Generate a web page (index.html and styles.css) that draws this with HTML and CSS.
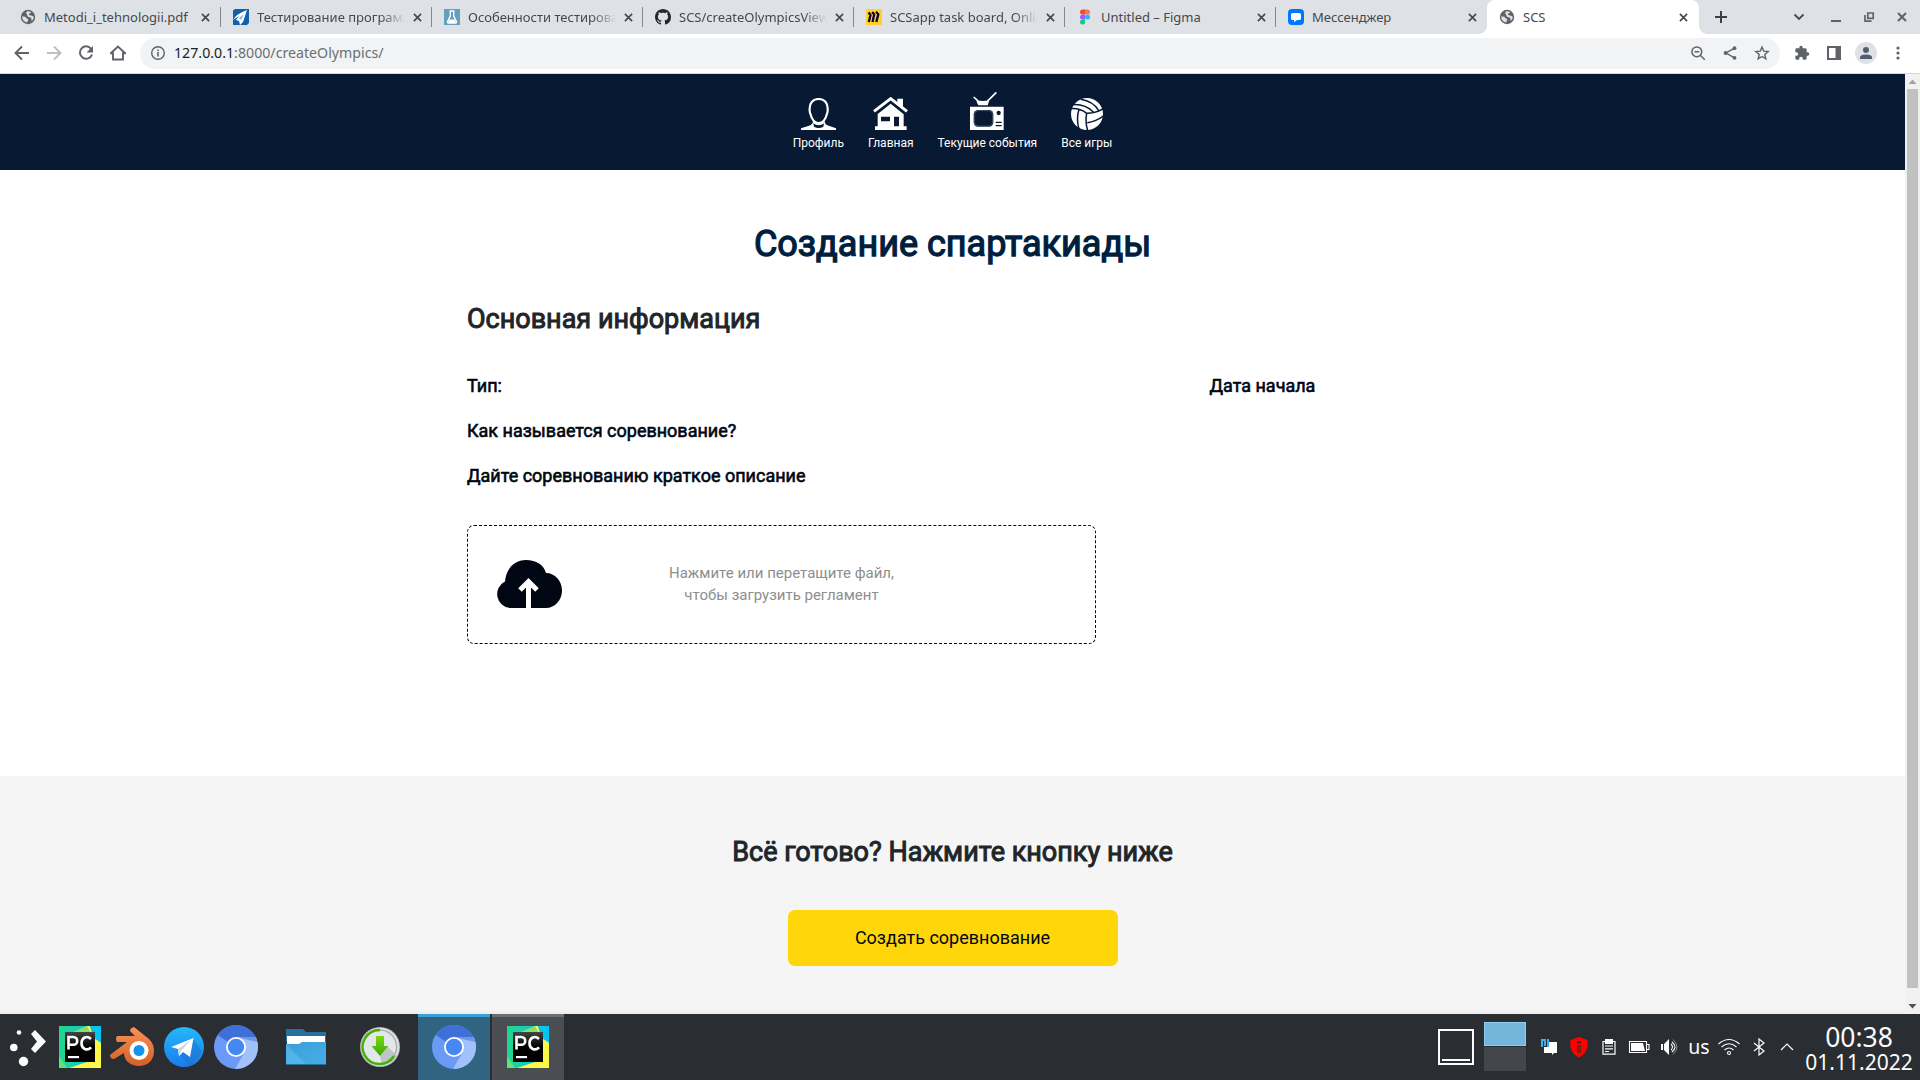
FILE: index.html
```html
<!DOCTYPE html>
<html lang="ru">
<head>
<meta charset="utf-8">
<title>SCS</title>
<link rel="stylesheet" href="styles.css">
</head>
<body>
<svg class="defs" width="0" height="0">
  <defs>
    <linearGradient id="pcg" x1="0" y1="0" x2="1" y2="0"><stop offset="0" stop-color="#21d789"/><stop offset="1" stop-color="#07c3f2"/></linearGradient>
    <linearGradient id="blk" x1="0" y1="0" x2="0" y2="1"><stop offset="0" stop-color="#444"/><stop offset=".5" stop-color="#000"/></linearGradient>
    <linearGradient id="tg" x1="0" y1="0" x2="0" y2="1"><stop offset="0" stop-color="#26b8fb"/><stop offset="1" stop-color="#1a7bee"/></linearGradient>
    <linearGradient id="fold" x1="0" y1="0" x2="1" y2="1"><stop offset="0" stop-color="#3b9fd9"/><stop offset="1" stop-color="#45aee6"/></linearGradient>
    <linearGradient id="orb" x1="0" y1="0" x2="0" y2="1"><stop offset="0" stop-color="#fb9150"/><stop offset="1" stop-color="#d4602c"/></linearGradient>
    <linearGradient id="arr" x1="0" y1="0" x2="0" y2="1"><stop offset="0" stop-color="#7adb0c"/><stop offset="1" stop-color="#3aa50a"/></linearGradient>
    <clipPath id="disc"><circle cx="22" cy="22" r="22"/></clipPath>
  </defs>
  <symbol id="globe" viewBox="0 0 16 16"><circle cx="8" cy="8" r="7.2" fill="#5f6368"/><path d="M2.3 7.3c2 .2 3.5.4 4 1.6.4 1 1.9.6 2 1.7.1 1-1 1.2-.9 2.8C4 13.300 2 10.500 2.300 7.300zM7 2.400c1.500-.3 3 .1 4 .8-.3 1.200-1.700.9-2.100 1.800-.3.800 1 1.200 2 1.400 1.300.2 2.200.600 2.900 1.300-.1 1.800-1 3.400-2.200 4.400-.3-1.300.2-2.300-.5-3.100-.8-.8-2.300-.5-3.300-1.400C6.700 6.500 7.800 5.900 6.700 5.100 6 4.600 6 3.100 7 2.400z" fill="#dee1e6"/></symbol>
  <symbol id="x" viewBox="0 0 10 10"><path d="M1 1l8 8M9 1L1 9" stroke="#45494d" stroke-width="1.8" fill="none"/></symbol>
  <symbol id="pycharm" viewBox="0 0 42 42"><rect width="42" height="42" fill="url(#pcg)"/><path d="M22 7L28 0h3l3 11 8 4v27H10L34 34z" fill="#fcf84a"/><path d="M0 30l8 12H0z" fill="#5fe37a"/><path d="M31 0h11v17l-7-5z" fill="#07c3f2"/><path d="M14 6l14-6 4 7z" fill="#8be064"/><rect x="6" y="6" width="30" height="30" fill="url(#blk)"/><rect x="9" y="30" width="11" height="2.200" fill="#fff"/><path d="M9.500 23.500V11h4.700c5.300 0 5.300 7.800 0 7.800H9.500M32 13c-4-4-9.500-1.500-9.500 4.200s5.500 8.300 9.600 4.100" fill="none" stroke="#fff" stroke-width="2.600"/></symbol>
  <symbol id="chromium" viewBox="0 0 44 44"><g clip-path="url(#disc)"><rect width="44" height="44" fill="#6b9af6"/><path d="M22 22L2 9V0h42v13H22z" fill="#3f6fd8"/><path d="M22 12h24v34H20l10-18z" fill="#a1c1fb"/><path d="M22 12h21v5L26 13z" fill="#6f96e6"/></g><circle cx="22" cy="22" r="10" fill="#fff"/><circle cx="22" cy="22" r="8.200" fill="#4587f3"/></symbol>
</svg>

<header class="tabs">
  <div class="tab first"><svg class="fav"><use href="#globe"/></svg><span class="title">Metodi_i_tehnologii.pdf</span><svg class="x"><use href="#x"/></svg></div>
  <div class="tab"><svg class="fav" viewBox="0 0 16 16"><path d="M0 1.500L2 0h14v14l-2 2H0z" fill="#1161b0"/><path d="M0 11Q3 5 14 1l-1 3-3 9-3 3-1-4-3-1 3-4z" fill="#fff"/><path d="M6 9l5-4-3 6z" fill="#87b4dc"/></svg><span class="title fade">Тестирование программ</span><svg class="x"><use href="#x"/></svg></div>
  <div class="tab"><svg class="fav" viewBox="0 0 16 16"><rect width="16" height="16" fill="#61a1bd"/><path d="M5.500 2h5M6.300 2v5L3.500 12.700q-.3 1.300 1 1.300h7q1.300 0 1-1.300L9.700 7V2" fill="none" stroke="#fff" stroke-width="1.400"/><path d="M5.500 10.500h5l1.500 3.500H4z" fill="#fff"/></svg><span class="title fade">Особенности тестирова</span><svg class="x"><use href="#x"/></svg></div>
  <div class="tab"><svg class="fav" viewBox="0 0 16 16"><path fill="#24292f" d="M8 0C3.580 0 0 3.580 0 8c0 3.540 2.290 6.530 5.470 7.590.4.070.55-.17.55-.38 0-.19-.01-.82-.01-1.490-2.010.37-2.530-.49-2.690-.94-.09-.23-.48-.94-.82-1.130-.28-.15-.68-.52-.01-.53.63-.01 1.080.58 1.230.82.72 1.210 1.870.87 2.330.66.070-.52.28-.87.51-1.070-1.780-.2-3.640-.89-3.640-3.950 0-.87.31-1.590.82-2.150-.08-.2-.36-1.020.08-2.120 0 0 .67-.21 2.200.82.640-.18 1.320-.27 2-.27s1.360.09 2 .27c1.530-1.040 2.200-.82 2.200-.82.440 1.100.160 1.920.080 2.120.51.560.82 1.270.82 2.150 0 3.070-1.870 3.750-3.650 3.950.29.250.54.730.54 1.480 0 1.070-.01 1.930-.01 2.200 0 .21.15.46.55.38A8.010 8.010 0 0 0 16 8c0-4.420-3.580-8-8-8z"/></svg><span class="title fade">SCS/createOlympicsView</span><svg class="x"><use href="#x"/></svg></div>
  <div class="tab"><svg class="fav" viewBox="0 0 16 16"><rect width="16" height="16" rx="1" fill="#ffd02f"/><path d="M2.500 3.500l2 2.500L2.800 13M6.200 3l2 2.500L6.500 13M10 2.700l2.300 2.500L10.300 13" fill="none" stroke="#0a0630" stroke-width="2.300"/></svg><span class="title fade">SCSapp task board, Onlin</span><svg class="x"><use href="#x"/></svg></div>
  <div class="tab"><svg class="fav" viewBox="0 0 16 16"><path d="M8 .5H5.500a2.500 2.500 0 0 0 0 5H8z" fill="#f24e1e"/><path d="M8 .5h2.500a2.500 2.500 0 0 1 0 5H8z" fill="#ff7262"/><path d="M8 5.500H5.500a2.500 2.500 0 0 0 0 5H8z" fill="#a259ff"/><circle cx="10.500" cy="8" r="2.500" fill="#1abcfe"/><path d="M8 10.500H5.500A2.500 2.500 0 1 0 8 13z" fill="#0acf83"/></svg><span class="title">Untitled – Figma</span><svg class="x"><use href="#x"/></svg></div>
  <div class="tab last"><svg class="fav" viewBox="0 0 16 16"><rect width="16" height="16" rx="4" fill="#07f"/><path d="M4.500 4h7q1.500 0 1.500 1.500v4q0 1.500-1.500 1.500H9l-3 2.200V11H4.500Q3 11 3 9.500v-4Q3 4 4.500 4z" fill="#fff"/></svg><span class="title">Мессенджер</span><svg class="x"><use href="#x"/></svg></div>
  <div class="tab active"><svg class="fav"><use href="#globe"/></svg><span class="title">SCS</span><svg class="x"><use href="#x"/></svg></div>
  <svg class="plus" viewBox="0 0 12 12"><path d="M6 0v12M0 6h12" stroke="#3c4043" stroke-width="2"/></svg>
  <div class="wm">
    <svg viewBox="0 0 16 16"><path d="M3.500 5.500L8 10l4.500-4.500" fill="none" stroke="#45494d" stroke-width="1.800"/></svg>
    <svg viewBox="0 0 16 16"><path d="M3 12h10" stroke="#5f6368" stroke-width="2"/></svg>
    <svg viewBox="0 0 16 16"><path d="M6.800 4h5.400v5.400H6.800zM4 6v6.200h6.500" fill="none" stroke="#5f6368" stroke-width="1.700"/></svg>
    <svg viewBox="0 0 16 16"><path d="M4 4l8 8M12 4l-8 8" stroke="#5f6368" stroke-width="2"/></svg>
  </div>
</header>

<div class="toolbar">
  <div class="nav-buttons">
    <svg viewBox="0 0 16 16"><path d="M15 8H2M8 1.500L1.500 8 8 14.500" fill="none" stroke="#5f6368" stroke-width="1.900"/></svg>
    <svg viewBox="0 0 16 16"><path d="M1 8h13M8 1.500L14.500 8 8 14.500" fill="none" stroke="#bcbec1" stroke-width="1.900"/></svg>
    <svg viewBox="0 0 16 16"><path d="M13.200 4A6.200 6.200 0 1 0 14 9.500" fill="none" stroke="#5f6368" stroke-width="2"/><path d="M15 1v6.500H8.500z" fill="#5f6368"/></svg>
    <svg viewBox="0 0 16 16"><path d="M.8 8.200L8 1.500l7.200 6.700H13V14.500H3V8.200z" fill="none" stroke="#5f6368" stroke-width="1.900"/></svg>
  </div>
  <div class="omnibox">
    <svg viewBox="0 0 16 16"><circle cx="8" cy="8" r="6.300" fill="none" stroke="#5f6368" stroke-width="1.400"/><path d="M8 7v4.500M8 4.400v1.500" stroke="#5f6368" stroke-width="1.600"/></svg>
    <span class="url"><b>127.0.0.1</b>:8000/createOlympics/</span>
    <div class="actions">
      <svg viewBox="0 0 16 16"><circle cx="6.800" cy="6.800" r="4.900" fill="none" stroke="#5f6368" stroke-width="1.500"/><path d="M4.500 6.800h4.600M10.300 10.300l4.500 4.500" stroke="#5f6368" stroke-width="1.500"/></svg>
      <svg viewBox="0 0 16 16"><path d="M12.500 3.200L4 8l8.500 4.800" fill="none" stroke="#5f6368" stroke-width="1.400"/><circle cx="12.500" cy="3.200" r="1.900" fill="#5f6368"/><circle cx="3.600" cy="8" r="2" fill="#5f6368"/><circle cx="12.500" cy="12.800" r="1.900" fill="#5f6368"/></svg>
      <svg viewBox="0 0 16 16"><path d="M8 2l1.700 4.100 4.500.4-3.400 2.900 1 4.400L8 11.500l-3.800 2.300 1-4.400-3.400-2.900 4.500-.4z" fill="none" stroke="#5f6368" stroke-width="1.400"/></svg>
    </div>
  </div>
  <div class="extras">
    <svg viewBox="0 0 24 24"><path fill="#5f6368" d="M20.500 11H19V7c0-1.100-.9-2-2-2h-4V3.500a2.500 2.500 0 0 0-5 0V5H4c-1.100 0-1.990.9-1.990 2v3.800H3.500c1.490 0 2.700 1.210 2.700 2.700s-1.210 2.700-2.700 2.700H2V20c0 1.100.9 2 2 2h3.800v-1.500c0-1.490 1.210-2.700 2.700-2.700s2.700 1.210 2.700 2.700V22H17c1.100 0 2-.9 2-2v-4h1.500a2.500 2.500 0 0 0 0-5z"/></svg>
    <svg viewBox="0 0 16 16"><path d="M2 2h12v12H2z" fill="none" stroke="#5f6368" stroke-width="2"/><path d="M9.500 2H14v12H9.500z" fill="#5f6368"/></svg>
    <svg class="avatar" viewBox="0 0 22 22"><circle cx="11" cy="11" r="11" fill="#dee1e6"/><circle cx="11" cy="8" r="3" fill="#525d72"/><path d="M5 17v-1.500q0-3 6-3t6 3V17z" fill="#525d72"/></svg>
    <svg viewBox="0 0 16 16"><g fill="#5f6368"><circle cx="8" cy="3" r="1.600"/><circle cx="8" cy="8" r="1.600"/><circle cx="8" cy="13" r="1.600"/></g></svg>
  </div>
</div>

<div class="viewport">
  <div class="page">
    <nav class="menu">
      <a><svg width="35" height="32" viewBox="123 66 105 96"><path d="M123 162v-5l24-8q12-3 12-13h35q0 10 12 13l22 8v5z" fill="#fff"/><path d="M160 142q6 6 16 6t16-6l-2 10q-14 8-28 0z" fill="#071933"/><path d="M176 69c-18 0-27 13-27 28 0 4-1 10 2 16 4 16 12 28 25 28s21-12 25-28c3-6 2-12 2-16 0-15-9-28-27-28z" fill="#071933" stroke="#fff" stroke-width="6.500"/></svg>Профиль</a>
      <a><svg width="35" height="33" viewBox="340 62 103 99"><path d="M353 113l39-31 39 32v36h9v11h-95v-11h8z" fill="#fff"/><path d="M340 108l52-40 51 40" fill="none" stroke="#071933" stroke-width="15"/><path d="M412 67h17v26l-17-13z" fill="#fff"/><path d="M342 105l50-38 49 38" fill="none" stroke="#fff" stroke-width="9"/><path d="M363 121h27v14h-27zM402 121h15v29h-15z" fill="#071933"/></svg>Главная</a>
      <a><svg width="34" height="38" viewBox="631 48 102 114"><path d="M631 92h101v70H631z" fill="#fff"/><path d="M642 63l22 20M710 49l-34 34" stroke="#fff" stroke-width="5"/><path d="M650 76q8-3 20-1 10-2 18 1l-4 12h-28z" fill="#fff"/><rect x="642" y="102" width="59" height="50" rx="13" fill="#071933"/><rect x="644" y="104" width="55" height="46" rx="12" fill="none" stroke="#aab2bf" stroke-width="1"/><circle cx="717" cy="111" r="6.500" fill="#071933"/><path d="M708 139h18M708 149h18" stroke="#071933" stroke-width="4"/></svg>Текущие события</a>
      <a><svg width="32" height="32" viewBox="933 66 96 96"><circle cx="981" cy="114" r="48" fill="#fff"/><g fill="none" stroke="#071933" stroke-width="4.500"><path d="M932 98Q960 96 980 112Q1006 112 1030 98M980 112Q975 138 983 164M940 86Q975 84 1000 108M962 70Q1000 76 1016 104M957 100Q948 128 957 160M982 140Q1008 136 1030 120"/></g></svg>Все игры</a>
    </nav>
    <main class="form">
      <h1>Создание спартакиады</h1>
      <h2>Основная информация</h2>
      <div class="fields">
        <div class="col"><label>Тип:</label><label>Как называется соревнование?</label><label>Дайте соревнованию краткое описание</label></div>
        <div class="col"><label>Дата начала</label></div>
      </div>
      <div class="drop">
        <svg width="66" height="48" viewBox="0 0 66 48"><path d="M14 48A14 14 0 0 1 9 21.500C10 9 18 0 30 0c10 0 18 5 20 13 9 0 16 8 16 17.500S59 48 50 48z" fill="#000712"/><path d="M32.500 48V23M24 30l8.500-8.500L41 30" fill="none" stroke="#fff" stroke-width="5"/></svg>
        <p>Нажмите или перетащите файл,<br>чтобы загрузить регламент</p>
      </div>
    </main>
    <section class="submit">
      <h2>Всё готово? Нажмите кнопку ниже</h2>
      <button>Создать соревнование</button>
    </section>
  </div>
  <div class="scroll">
    <svg viewBox="0 0 15 15"><path d="M3.500 10h8l-4-4.500z" fill="#a3a3a3"/></svg>
    <div class="thumb"></div>
    <svg viewBox="0 0 15 15"><path d="M3.500 5h8l-4 4.500z" fill="#505050"/></svg>
  </div>
</div>

<footer class="taskbar">
  <div class="launchers">
    <svg class="menu-icon" width="36" height="42" viewBox="0 0 36 42"><g fill="#fcfcfc"><circle cx="9" cy="6.500" r="2.300"/><circle cx="3.800" cy="21.500" r="3.800"/><circle cx="13.500" cy="35.500" r="4.700"/><path d="M21 8l4-4 11 11.500L25 27l-4-4 6-7.500z"/></g></svg>
    <svg class="pc" width="42" height="42"><use href="#pycharm"/></svg>
    <svg class="blender" width="44" height="40" viewBox="0 0 44 40"><path d="M7 9h18l-5-5q0-3 4-4l15 12q5 5 5 12c0 10-7 15-15 15S14 34 14 26L4 32q-4 0-4-4l17-13H7q-2-3 0-6z" fill="url(#orb)"/><circle cx="29" cy="23.500" r="9.500" fill="#fff"/><circle cx="29" cy="23.500" r="5.500" fill="#1494e8"/></svg>
    <svg class="tele" width="40" height="40" viewBox="0 0 40 40"><circle cx="20" cy="20" r="20" fill="url(#tg)"/><path d="M17 28l12-16 9 12q-3 11-14 15z" fill="#1b70c9" opacity=".5"/><path d="M7 20l22.500-9L26 30l-7-5-4 4-1-7z" fill="#fff"/><path d="M14 22l13-9-10 11-2 5z" fill="#c3d8ea"/></svg>
    <svg class="chr" width="44" height="44"><use href="#chromium"/></svg>
    <svg class="folder" width="40" height="36" viewBox="0 0 40 36"><path d="M0 0h17l3 3h20v10H0z" fill="#24719c"/><path d="M1 7h38v8H1z" fill="#fff"/><path d="M0 15h13l3-2h24v23H0z" fill="url(#fold)"/><path d="M0 15l21 21H1L0 35z" fill="#5dbdf0" opacity=".6"/><path d="M0 35h40v1H0z" fill="#256f9b"/></svg>
    <svg class="down" width="40" height="40" viewBox="0 0 40 40"><circle cx="20" cy="20" r="20" fill="#b5b9bb"/><circle cx="20" cy="20" r="19" fill="#e4e7e8"/><path d="M28 20l9 9q-5 8-15 8l-2-8z" fill="#bfc4c5"/><path d="M20 3a17 17 0 1 0 14 26" fill="none" stroke="#46b00a" stroke-width="2.500"/><path d="M34 29a17 17 0 0 0-14-26" fill="none" stroke="#a9b0ae" stroke-width="1.500"/><path d="M16 9h8v10h4.500L20 29l-8.500-10H16z" fill="url(#arr)"/></svg>
  </div>
  <div class="task current"><svg width="44" height="44"><use href="#chromium"/></svg></div>
  <div class="task"><svg width="42" height="42"><use href="#pycharm"/></svg></div>
  <div class="tray">
    <svg class="desk" width="36" height="36" viewBox="0 0 36 36"><path d="M1 1h34v34H1z" fill="none" stroke="#fcfcfc" stroke-width="2"/><path d="M4 31h28" stroke="#fcfcfc" stroke-width="2"/></svg>
    <div class="pager"><i></i><i></i></div>
    <div class="status">
      <svg viewBox="0 0 22 22"><path d="M6 6h13v11h-3l-2 2v-2H6z" fill="#fcfcfc"/><path d="M3 3h8v8H3z" fill="#2a2e32"/><path d="M4 11V4h3v6M10 3v8" fill="none" stroke="#3daee9" stroke-width="2"/></svg>
      <svg viewBox="0 0 22 22"><path d="M11 1l8.500 3c1 7-1 14-8.500 17.500C3.500 18 1.500 11 2.500 4z" fill="#f00"/><path d="M11 9v7.500M11 5v2.500" stroke="#2a2e32" stroke-width="3.500"/><path d="M11 10v5" stroke="#f00" stroke-width="1"/></svg>
      <svg viewBox="0 0 22 22"><path d="M5 5.500h12v12.700H5zM7 10h8M7 12.800h8M7 15.500h4" fill="none" stroke="#fcfcfc" stroke-width="1.200"/><path d="M7 3h8v5H7z" fill="#fcfcfc"/></svg>
      <svg viewBox="0 0 22 22"><path d="M1.500 5.500h17v11h-17zM19 8.500h2v5h-2" fill="none" stroke="#fcfcfc" stroke-width="1.100"/><path d="M3 7h12l2 8H3z" fill="#fcfcfc"/></svg>
      <svg viewBox="0 0 22 22"><path d="M3 8h2v6H3zM6 8l5-5v16l-5-5z" fill="#fcfcfc"/><path d="M13 8q3 3 0 6M14 6q6 5 0 10" fill="none" stroke="#fcfcfc" stroke-width="1.100"/><path d="M15 3.500q8 7.500 0 15" fill="none" stroke="#85888b"/></svg>
      <span>us</span>
      <svg viewBox="0 0 22 22"><g fill="none" stroke="#fcfcfc" stroke-width="1.100"><circle cx="11" cy="17" r="1.500"/><path d="M.5 8q10.500-9 21 0M3.500 11q7.500-6.500 15 0M6.500 14q4.500-4 9 0"/></g></svg>
      <svg viewBox="0 0 22 22"><path d="M6 7l10 8-5 4V3l5 4-10 8" fill="none" stroke="#fcfcfc" stroke-width="1.200"/></svg>
      <svg viewBox="0 0 22 22"><path d="M3 14l6-6 6 6" fill="none" stroke="#fcfcfc" stroke-width="1.200"/></svg>
    </div>
    <div class="clock"><time>00:38</time><time class="date">01.11.2022</time></div>
  </div>
</footer>
</body>
</html>
```
FILE: styles.css
```css
* { box-sizing: border-box; }
body { margin: 0; width: 1920px; height: 1080px; overflow: hidden; display: flex; flex-direction: column; background: #fff; font-family: "Noto Sans", sans-serif; }
svg { display: block; flex: none; }
.defs { position: absolute; }
h1, h2, p { margin: 0; }

/* tab strip */
.tabs { height: 34px; flex: none; display: flex; align-items: center; background: #dee1e6; padding-left: 10px; }
.tab { width: 211px; height: 34px; flex: none; display: flex; align-items: center; padding-left: 12px; position: relative; font-size: 13px; color: #45494d; }
.tab.first { padding-left: 10px; }
.tab:not(.active)::after { content: ""; position: absolute; right: 0; top: 7px; width: 1px; height: 20px; background: #85898f; }
.tab.last::after { display: none; }
.tab.active { width: 212px; background: #fff; border-radius: 8px 8px 0 0; }
.tab.active::before, .tab.active::after { content: ""; position: absolute; bottom: 0; width: 8px; height: 8px; }
.tab.active::before { left: -8px; background: radial-gradient(circle at 0 0, transparent 7.500px, #fff 8px); }
.tab.active::after { right: -8px; background: radial-gradient(circle at 100% 0, transparent 7.500px, #fff 8px); }
.fav { width: 16px; height: 16px; }
.title { width: 148px; margin: 0 8px 0 8px; white-space: nowrap; }
.fade { -webkit-mask-image: linear-gradient(90deg, #000 84%, transparent); mask-image: linear-gradient(90deg, #000 84%, transparent); }
.x { width: 9px; height: 9px; }
.first .x { margin-left: 1px; }
.plus { width: 12px; height: 12px; margin-left: 16px; }
.wm { display: flex; gap: 17px; margin-left: auto; padding-right: 10px; }
.wm svg { width: 16px; height: 16px; }
.wm svg:first-child { margin-right: 4px; }

/* toolbar */
.toolbar { height: 40px; flex: none; display: flex; align-items: center; border-bottom: 1px solid #d5d7da; padding: 0 0 1px 14px; }
.nav-buttons { display: flex; gap: 16px; }
.toolbar svg { width: 16px; height: 16px; }
.omnibox { width: 1640px; height: 31px; margin-left: 14px; border-radius: 16px; background: #f1f3f4; display: flex; align-items: center; padding: 0 10px; }
.url { margin: 0 0 1px 8px; font-size: 14.200px; line-height: 20px; color: #6b6f73; }
.url b { font-weight: 400; color: #202124; }
.actions { display: flex; gap: 16px; margin-left: auto; }
.extras { display: flex; align-items: center; gap: 16px; margin-left: 14px; }
.toolbar .avatar { width: 22px; height: 22px; margin: 0 -3px; }

/* page */
.viewport { height: 940px; flex: none; display: flex; }
.page { width: 1905px; font-family: Roboto, sans-serif; display: flex; flex-direction: column; }
.menu { height: 96px; flex: none; background: #071933; display: flex; justify-content: center; align-items: flex-end; gap: 24px; padding-bottom: 19px; }
.menu a { display: flex; flex-direction: column; align-items: center; gap: 5px; font-size: 12px; line-height: 16px; color: #fff; }
.form { height: 606px; flex: none; padding: 52px 467px 0; }
h1 { font-size: 36px; line-height: 44px; font-weight: 400; text-align: center; color: #001f3f; -webkit-text-stroke: 1.300px; }
h2 { font-size: 27px; line-height: 36px; font-weight: 400; color: #212529; -webkit-text-stroke: 1px; }
.form h2 { margin-top: 35px; }
.fields { display: flex; margin-top: 35px; }
.col { width: 742.500px; display: flex; flex-direction: column; gap: 18px; flex: none; }
.col:last-child { width: auto; }
label { font-size: 18px; line-height: 27px; color: #000712; -webkit-text-stroke: .6px; }
.drop { width: 629px; height: 119px; margin-top: 36px; border: 1px dashed #000712; border-radius: 7px; display: grid; grid-template-columns: 66px 1fr 66px; align-items: center; padding: 0 28px; }
.drop svg { margin: 0 0 2px; }
.drop p { margin-bottom: 2px; font-size: 15px; line-height: 22px; text-align: center; color: #8e8e8e; }
.submit { flex: 1; background: linear-gradient(#f5f5f5 98%, #ececec); display: flex; flex-direction: column; align-items: center; padding-top: 58px; }
button { width: 330px; height: 56px; margin-top: 40px; padding: 0 0 2px; border: 0; border-radius: 7px; background: #ffd60a; font: 18px Roboto, sans-serif; color: #000712; }
.scroll { width: 15px; background: #f1f1f1; display: flex; flex-direction: column; }
.scroll svg { width: 15px; height: 15px; }
.thumb { width: 11px; height: 899px; margin: 0 2px 11px; background: #c1c1c1; }

/* taskbar */
.taskbar { height: 66px; flex: none; display: flex; background: #2a2e32; color: #fcfcfc; }
.launchers { width: 418px; display: flex; align-items: center; padding-left: 10px; flex: none; }
.pc { margin-left: 13px; }
.blender { margin-left: 9px; }
.tele { margin-left: 10px; }
.chr { margin-left: 10px; }
.folder { margin-left: 28px; }
.down { margin-left: 34px; }
.task { width: 72px; border-top: 3px solid #6c6f73; background: #4a4d51; display: flex; align-items: center; justify-content: center; padding-bottom: 3px; margin-right: 2px; }
.task.current { background: #306480; border-color: #3c9fd9; }
.tray { margin-left: auto; display: flex; align-items: center; padding-right: 8px; }
.desk { width: 36px; }
.pager { width: 42px; margin: 0 12px 2px 10px; }
.pager i { display: block; height: 24px; background: #43474b; }
.pager i:first-child { background: #74b6db; border: 1px solid #8ccdf0; margin-bottom: 1px; }
.status { display: flex; align-items: center; gap: 8px; }
.status svg { width: 22px; height: 22px; }
.status span { width: 22px; font-size: 19.500px; line-height: 22px; text-align: center; }
.clock { width: 106px; margin: 4px 0 0 6px; display: flex; flex-direction: column; align-items: center; }
.clock time { font-size: 26.500px; line-height: 26px; }
.clock .date { font-size: 21px; line-height: 24px; }
```
